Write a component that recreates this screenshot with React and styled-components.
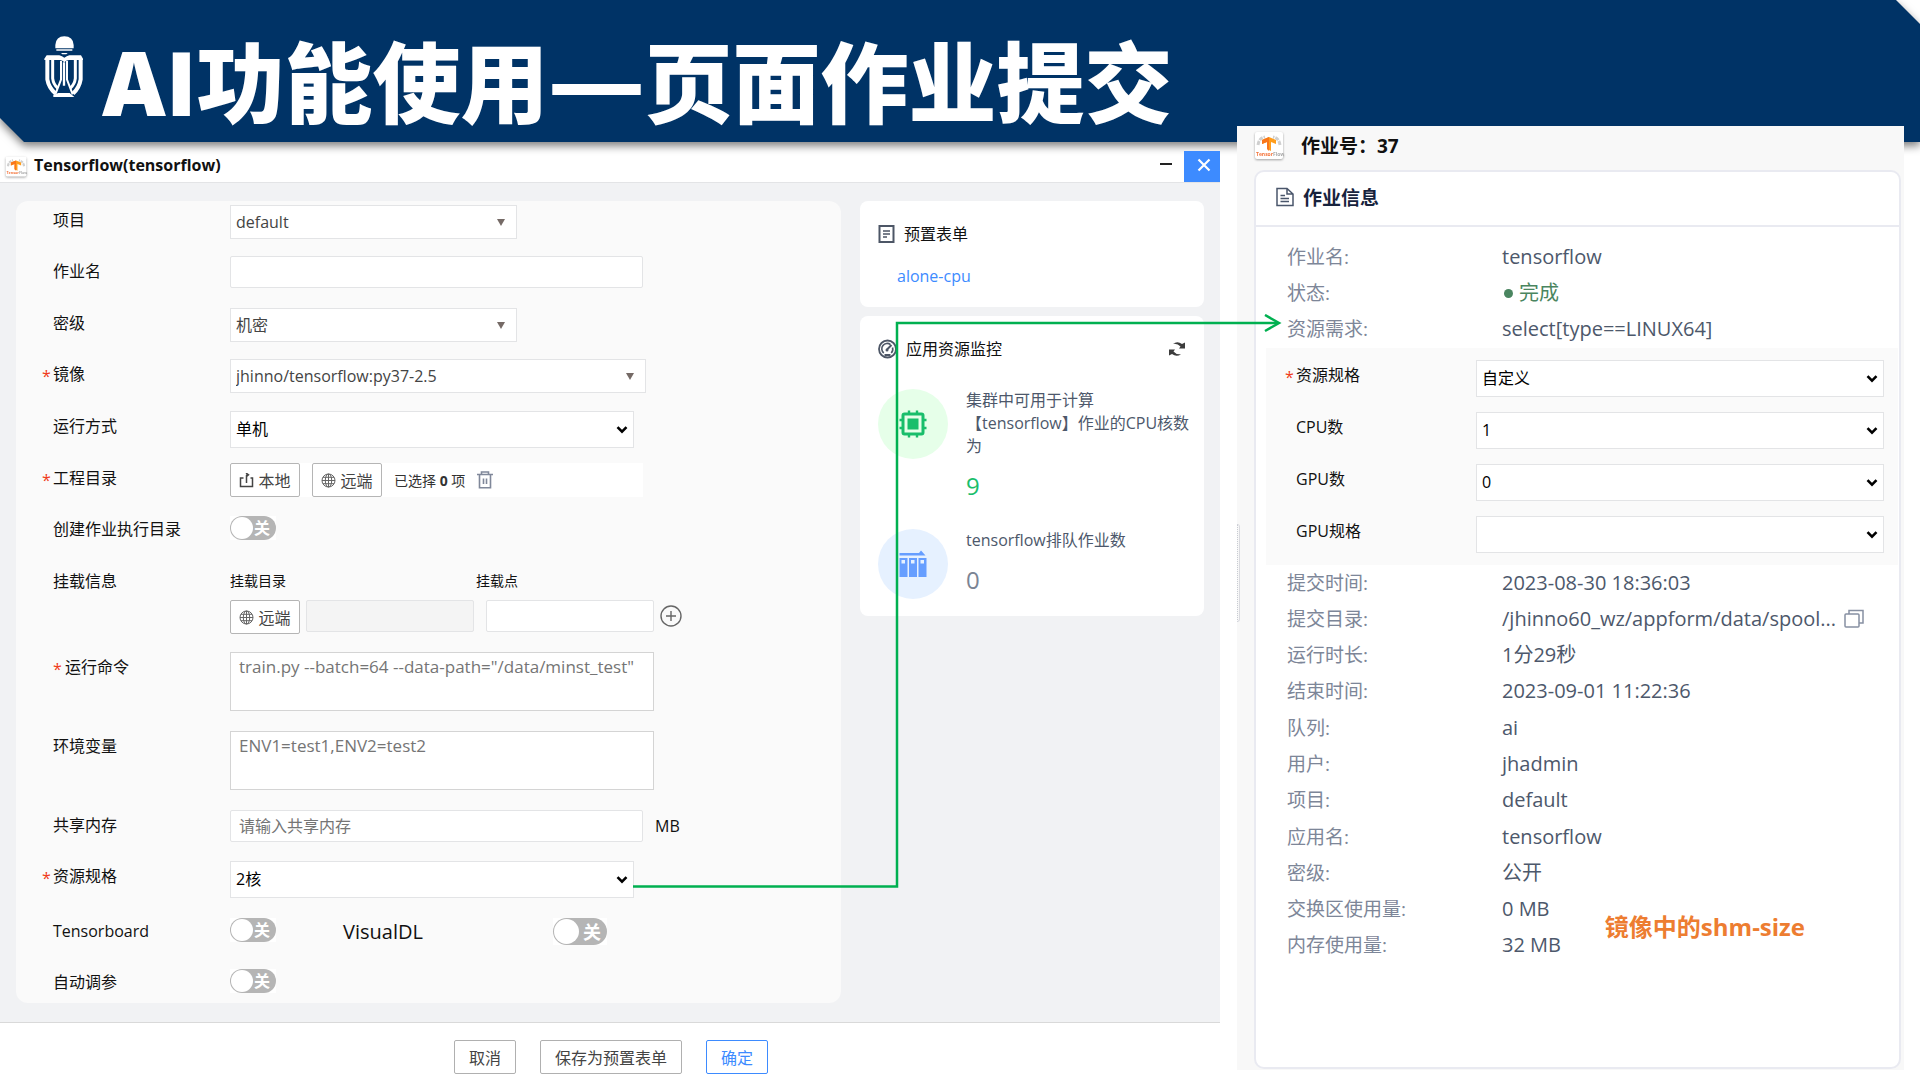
import React from 'react';
import styled, { createGlobalStyle } from 'styled-components';

const COLORS = {
	navy: '#003366',
	blue: '#3d8bff',
	green: '#19be6b',
	arrow: '#00b050',
	orange: '#ed7d31',
	text: '#111111',
	muted: '#7d8698',
	value: '#4d586b',
	border: '#e3e4e6',
	body: '#f1f2f4',
};

const FONT = "'Open Sans', 'Noto Sans CJK SC', sans-serif";

const JOB_INFO_TOP = [
	{ term: '作业名:', value: 'tensorflow' },
	{ term: '状态:', value: '完成', done: true },
	{ term: '资源需求:', value: 'select[type==LINUX64]' },
];

const JOB_INFO_BOTTOM = [
	{ term: '提交时间:', value: '2023-08-30 18:36:03' },
	{ term: '提交目录:', value: '/jhinno60_wz/appform/data/spool...', copy: true },
	{ term: '运行时长:', value: '1分29秒' },
	{ term: '结束时间:', value: '2023-09-01 11:22:36' },
	{ term: '队列:', value: 'ai' },
	{ term: '用户:', value: 'jhadmin' },
	{ term: '项目:', value: 'default' },
	{ term: '应用名:', value: 'tensorflow' },
	{ term: '密级:', value: '公开' },
	{ term: '交换区使用量:', value: '0 MB' },
	{ term: '内存使用量:', value: '32 MB' },
];

const SPEC_FIELDS = [
	{ id: 'job-spec', label: '资源规格', value: '自定义', required: true },
	{ id: 'job-cpu', label: 'CPU数', value: '1' },
	{ id: 'job-gpu', label: 'GPU数', value: '0' },
	{ id: 'job-gpu-spec', label: 'GPU规格', value: '' },
];

const App = () => {
	return (
		<Page>
			<GlobalStyle />
			<BannerShadow>
				<Banner>
					<UniversityLogo />
					<Title>AI功能使用<Dash>—</Dash>页面作业提交</Title>
				</Banner>
			</BannerShadow>
			<Main>
				<SubmitWindow />
				<JobPanel />
				<Connector />
			</Main>
		</Page>
	);
};

const SubmitWindow = () => (
	<Window>
		<TitleBar>
			<TensorflowIcon size={22} />
			<WindowTitle>Tensorflow(tensorflow)</WindowTitle>
			<WindowButton aria-label='最小化'>
				<svg width='14' height='14' viewBox='0 0 14 14'>
					<path d='M1 6H13' stroke='#222' strokeWidth='2' />
				</svg>
			</WindowButton>
			<WindowButton aria-label='关闭' $primary>
				<svg width='14' height='14' viewBox='0 0 14 14'>
					<path d='M1.500 1.500L12.500 12.500M12.500 1.500L1.500 12.500' stroke='#fff' strokeWidth='2.200' />
				</svg>
			</WindowButton>
		</TitleBar>
		<WindowBody>
			<SubmitForm />
			<Sidebar />
		</WindowBody>
		<Footer>
			<FooterButton>取消</FooterButton>
			<FooterButton>保存为预置表单</FooterButton>
			<FooterButton $primary>确定</FooterButton>
		</Footer>
	</Window>
);

const SubmitForm = () => (
	<FormCard>
		<Row $height={51}>
			<Label htmlFor='project'>项目</Label>
			<Dropdown id='project' value='default' width={287} arrow='triangle' />
		</Row>
		<Row>
			<Label htmlFor='job-name'>作业名</Label>
			<TextInput id='job-name' $width={413} />
		</Row>
		<Row $height={51}>
			<Label htmlFor='level'>密级</Label>
			<Dropdown id='level' value='机密' width={287} arrow='triangle' />
		</Row>
		<Row>
			<Label htmlFor='image' $required>镜像</Label>
			<Dropdown id='image' value='jhinno/tensorflow:py37-2.5' width={416} arrow='triangle' />
		</Row>
		<Row>
			<Label htmlFor='mode'>运行方式</Label>
			<Dropdown id='mode' value='单机' width={404} tall />
		</Row>
		<Row $height={51}>
			<Label as='span' $required>工程目录</Label>
			<FilePicker>
				<SmallButton>
					<UploadIcon />
					本地
				</SmallButton>
				<SmallButton>
					<GlobeIcon />
					远端
				</SmallButton>
				<Selected>
					已选择 <b>0</b> 项
				</Selected>
				<TrashIcon />
			</FilePicker>
		</Row>
		<Row>
			<Label htmlFor='create-dir'>创建作业执行目录</Label>
			<Toggle id='create-dir' />
		</Row>
		<Row $height={86}>
			<Label as='span'>挂载信息</Label>
			<Mounts>
				<SubLabel htmlFor='mount-dir'>挂载目录</SubLabel>
				<SubLabel htmlFor='mount-point'>挂载点</SubLabel>
				<MountSource>
					<SmallButton>
						<GlobeIcon />
						远端
					</SmallButton>
					<TextInput id='mount-dir' $width={168} disabled />
				</MountSource>
				<MountTarget>
					<TextInput id='mount-point' $width={168} />
					<IconButton aria-label='添加'>
						<PlusIcon />
					</IconButton>
				</MountTarget>
			</Mounts>
		</Row>
		<Row $height={79}>
			<Label htmlFor='command' $required $inset>运行命令</Label>
			<TextArea id='command' placeholder='train.py --batch=64 --data-path="/data/minst_test"' />
		</Row>
		<Row $height={79}>
			<Label htmlFor='env'>环境变量</Label>
			<TextArea id='env' placeholder='ENV1=test1,ENV2=test2' />
		</Row>
		<Row $height={51}>
			<Label htmlFor='shm'>共享内存</Label>
			<TextInput id='shm' $width={413} placeholder='请输入共享内存' />
			<Unit>MB</Unit>
		</Row>
		<Row $height={55}>
			<Label htmlFor='spec' $required>资源规格</Label>
			<Dropdown id='spec' value='2核' width={404} tall />
		</Row>
		<Row $height={51}>
			<Label htmlFor='tensorboard'>Tensorboard</Label>
			<Toggle id='tensorboard' />
			<WideLabel htmlFor='visualdl'>VisualDL</WideLabel>
			<Toggle id='visualdl' large />
		</Row>
		<Row $height={36}>
			<Label htmlFor='tuning'>自动调参</Label>
			<Toggle id='tuning' />
		</Row>
	</FormCard>
);

const Sidebar = () => (
	<SideColumn>
		<PresetCard>
			<CardHeading>
				<FormIcon />
				预置表单
			</CardHeading>
			<PresetLink href='#alone-cpu'>alone-cpu</PresetLink>
		</PresetCard>
		<MonitorCard>
			<CardHeading>
				<GaugeIcon />
				应用资源监控
				<RefreshButton aria-label='刷新'>
					<RefreshIcon />
				</RefreshButton>
			</CardHeading>
			<Stat>
				<StatIcon $color='#e6ffe9'>
					<ChipIcon />
				</StatIcon>
				<div>
					<StatText>集群中可用于计算【tensorflow】作业的CPU核数为</StatText>
					<StatValue $color={COLORS.green}>9</StatValue>
				</div>
			</Stat>
			<Stat>
				<StatIcon $color='#e6f1ff'>
					<QueueIcon />
				</StatIcon>
				<div>
					<StatText>tensorflow排队作业数</StatText>
					<StatValue $color='#7b8494'>0</StatValue>
				</div>
			</Stat>
		</MonitorCard>
	</SideColumn>
);

const JobPanel = () => (
	<Panel>
		<PanelHeader>
			<TensorflowIcon size={30} />
			作业号：37
		</PanelHeader>
		<InfoCard>
			<InfoHeader>
				<DocumentIcon />
				作业信息
			</InfoHeader>
			<InfoList items={JOB_INFO_TOP} height={109} />
			<SpecBlock>
				{SPEC_FIELDS.map(({ id, label, value, required }) => (
					<SpecRow key={id}>
						<Label htmlFor={id} $required={required}>{label}</Label>
						<Dropdown id={id} value={value} tall />
					</SpecRow>
				))}
			</SpecBlock>
			<InfoList items={JOB_INFO_BOTTOM} height={399} />
		</InfoCard>
		<DragHandle />
		<Note>镜像中的shm-size</Note>
	</Panel>
);

const InfoList = ({ items, height }) => (
	<InfoGrid $height={height}>
		{items.map(({ term, value, done, copy }) => (
			<InfoRow key={term}>
				<dt>{term}</dt>
				<InfoValue $done={done}>
					{value}
					{copy && (
						<IconButton aria-label='复制'>
							<CopyIcon />
						</IconButton>
					)}
				</InfoValue>
			</InfoRow>
		))}
	</InfoGrid>
);

const Dropdown = ({ id, value, width, tall, arrow = 'chevron' }) => (
	<SelectWrapper $width={width}>
		<Select id={id} defaultValue={value} $tall={tall} $soft={arrow === 'triangle'}>
			<option value={value}>{value}</option>
		</Select>
		{arrow === 'triangle' ? (
			<SelectArrow width='8' height='8' viewBox='0 0 8 8' $right={12}>
				<path d='M0 1H8L4 8Z' fill='#756a66' />
			</SelectArrow>
		) : (
			<SelectArrow width='12' height='8' viewBox='0 0 12 8' $right={6}>
				<path d='M1.500 1.200L6 5.700L10.500 1.200' fill='none' stroke='#000' strokeWidth='2.600' />
			</SelectArrow>
		)}
	</SelectWrapper>
);

const Toggle = ({ id, large }) => (
	<ToggleWrapper $large={large}>
		<ToggleInput type='checkbox' id={id} />
		<ToggleText>关</ToggleText>
	</ToggleWrapper>
);

/* Drawings */

const UniversityLogo = () => (
	<svg width='40' height='62' viewBox='42 35 118 186' fill='#fff'>
		<path d='M75 72V62Q77 36 102 36Q128 36 130 62V72Z' />
		<path d='M78 75H126V79H78Z' />
		<path d='M92 86H112L108 90H96Z' />
		<path d='M42 107V103L49 93H87Q95 95 102 100Q109 95 117 93H152L158 103V107H116Q106 108 102 114Q98 108 88 107Z' />
		<g fill='none' stroke='#fff'>
			<path d='M51 105V165Q55 190 76 208' strokeWidth='12' />
			<path d='M151 105V165Q147 190 128 208' strokeWidth='12' />
			<path d='M67 105V162Q69 180 82 191' strokeWidth='9' />
			<path d='M135 105V162Q133 180 120 191' strokeWidth='9' />
			<path d='M92 110V166L75 210' strokeWidth='6' />
			<path d='M110 110V166L127 210' strokeWidth='6' />
			<path d='M101 114V184' strokeWidth='7' />
		</g>
		<path d='M84 206H118L132 218H69V212Z' />
	</svg>
);

const TensorflowIcon = ({ size }) => (
	<IconTile width={size} height={size} viewBox='0 0 30 30'>
		<rect x='1' y='1' width='28' height='27' rx='2' fill='#fff' />
		<path d='M4 14Q5 7 11 6M26 14Q25 7 19 6' fill='none' stroke='#cfcfcf' strokeWidth='3' strokeDasharray='4 1' />
		<path d='M15 6L22 9V13L17 11V20L13 18V11L8 13V9Z' fill='#ff9d1c' />
		<path d='M15 6V20L13 18V11L8 13V9Z' fill='#f9761a' />
		<text x='2' y='25' fontSize='5' fontWeight='700' fill='#f4743b'>
			Tensor<tspan fill='#aaa'>Flow</tspan>
		</text>
	</IconTile>
);

const UploadIcon = () => (
	<svg width='15' height='15' viewBox='0 0 15 15' fill='none' stroke='#444' strokeWidth='1.500'>
		<path d='M4.500 5H1.500V13.500H13.500V5H11.500M7.500 10V2.500Q7.500 1.800 9 1.800M7 4L9.500 1.800L7 0' />
	</svg>
);

const GlobeIcon = () => (
	<svg width='15' height='15' viewBox='0 0 15 15' fill='none' stroke='#666'>
		<circle cx='7.500' cy='7.500' r='6.500' />
		<ellipse cx='7.500' cy='7.500' rx='3.200' ry='6.500' />
		<path d='M1 7.500H14M7.500 1V14M2 4.300H13M2 10.700H13' />
	</svg>
);

const TrashIcon = () => (
	<svg width='16' height='18' viewBox='0 0 16 18' fill='none' stroke='#80889a' strokeWidth='1.600'>
		<path d='M0 3.500H16M4.500 3V1H11.500V3M2.500 4V16.800H13.500V4M6.500 7.500V13M9.500 7.500V13' />
	</svg>
);

const PlusIcon = () => (
	<svg width='24' height='24' viewBox='0 0 24 24' fill='none' stroke='#666' strokeWidth='1.400'>
		<circle cx='12' cy='12' r='10' />
		<path d='M12 7V17M7 12H17' />
	</svg>
);

const FormIcon = () => (
	<svg width='18' height='20' viewBox='0 0 18 20' fill='none' stroke='#4d5666' strokeWidth='2'>
		<path d='M1.500 2H15.500V18H1.500Z' />
		<path d='M5 7H12M5 10H12M5 13H9' strokeWidth='1.500' />
	</svg>
);

const GaugeIcon = () => (
	<svg width='20' height='20' viewBox='0 0 20 20' fill='none' stroke='#4d5666'>
		<circle cx='9.500' cy='10' r='8.500' strokeWidth='1.800' />
		<path d='M5.800 14A5.300 5.300 0 1 1 12.500 5.600M14.500 8.500A5.300 5.300 0 0 1 13.200 14' strokeWidth='1.600' />
		<path d='M9 10.500L13.500 6' strokeWidth='2' />
		<circle cx='9' cy='11' r='1.500' fill='#4d5666' stroke='none' />
		<path d='M6.500 16H12.500' strokeWidth='2' />
	</svg>
);

const RefreshIcon = () => (
	<svg width='18' height='16' viewBox='0 0 18 16' fill='#3c3c3c'>
		<path d='M5 2.800Q9.500 -0.500 14 3L17 1.500V7.500H11L12.500 5.500Q9.500 2 5 2.800Z' />
		<path d='M13 13.200Q8.500 16.500 4 13L1 14.500V8.500H7L5.500 10.500Q8.500 14 13 13.200Z' />
	</svg>
);

const ChipIcon = () => (
	<svg width='28' height='28' viewBox='0 0 28 28' fill='none' stroke={COLORS.green}>
		<rect x='4' y='4' width='20' height='20' rx='1.500' strokeWidth='3' />
		<rect x='8.500' y='8.500' width='11' height='11' fill={COLORS.green} stroke='none' />
		<path d='M10 0.500V4M18 0.500V4M10 24V27.500M18 24V27.500M0.500 10H4M0.500 18H4M24 10H27.500M24 18H27.500' strokeWidth='2.400' />
	</svg>
);

const QueueIcon = () => (
	<svg width='28' height='28' viewBox='0 0 28 28' fill='#669eff'>
		<path d='M0.500 3H20L22 0.500L26.500 5.500H0.500Z' />
		<path d='M0.500 8H8.500V27H0.500ZM10 8H18V27H10ZM19.500 8H27.500V27H19.500Z' />
		<path d='M2.500 10H6V13.500H2.500ZM12 10H15.500V13.500H12ZM21.500 10H25V13.500H21.500Z' fill='#e6f1ff' />
	</svg>
);

const DocumentIcon = () => (
	<svg width='18' height='20' viewBox='0 0 18 20' fill='none' stroke='#4a566b' strokeWidth='1.500'>
		<path d='M1 1.500H11L17 7V18.500H1ZM11 1.500V7H17' />
		<path d='M4.500 8.500H9M4.500 11.500H13M4.500 14.500H13' />
	</svg>
);

const CopyIcon = () => (
	<svg width='20' height='20' viewBox='0 0 20 20' fill='none' stroke='#8790a2' strokeWidth='1.500'>
		<rect x='1' y='5' width='14' height='13' rx='1' />
		<path d='M5 5V1.500H19V14H15' />
	</svg>
);

const Connector = () => (
	<ConnectorSvg width='650' height='580' viewBox='0 0 650 580' fill='none' stroke={COLORS.arrow}>
		<path d='M0 572.500H264V9H645' strokeWidth='2.500' />
		<path d='M632 1L646 9L632 17' strokeWidth='2.500' />
	</ConnectorSvg>
);

/* Styles */

const GlobalStyle = createGlobalStyle`
	*,
	*::before,
	*::after {
		box-sizing: border-box;
	}

	body {
		margin: 0;
		background: #ffffff;
		color: ${COLORS.text};
		font-family: ${FONT};
		font-size: 16px;
	}

	input, select, textarea, button {
		font: inherit;
		color: inherit;
	}
`;

const Page = styled.div`
	display: flex;
	flex-direction: column;
	min-height: 100vh;
	overflow: hidden;
`;

const BannerShadow = styled.header`
	position: relative;
	filter: drop-shadow(0 4px 4px rgba(0, 0, 0, 0.5));
`;

const Banner = styled.div`
	display: flex;
	align-items: flex-start;
	gap: 18px;
	height: 142px;
	padding: 36px 44px 0;
	background: ${COLORS.navy};
	clip-path: polygon(0 0, calc(100% - 24px) 0, 100% 24px, 100% 100%, 24px 100%, 0 118px);
`;

const Title = styled.h1`
	margin: 0;
	color: #ffffff;
	font-size: 88px;
	font-weight: 900;
	line-height: 92px;
	white-space: nowrap;
`;

const Dash = styled.span`
	font-family: 'Open Sans', sans-serif;
	font-size: 96px;
	font-weight: 700;
	line-height: 1px;
`;

const Main = styled.main`
	position: relative;
	flex: 1;
	display: grid;
	grid-template-columns: minmax(0, 1220fr) minmax(0, 667fr);
	gap: 17px;
	padding-right: 16px;
`;

const Window = styled.section`
	display: flex;
	flex-direction: column;
	padding-top: 9px;
`;

const TitleBar = styled.div`
	display: flex;
	align-items: center;
	height: 32px;
	padding-left: 5px;
	border-bottom: 1px solid ${COLORS.border};
`;

const WindowTitle = styled.h2`
	flex: 1;
	margin: 0 0 4px 7px;
	font-size: 16px;
	font-weight: 700;
	line-height: 24px;
`;

const WindowButton = styled.button`
	display: grid;
	place-items: center;
	width: 36px;
	height: 31px;
	margin-left: 2px;
	padding: 0 0 3px 4px;
	border: none;
	background: ${(props) => (props.$primary ? COLORS.blue : 'transparent')};
`;

const WindowBody = styled.div`
	flex: 1;
	display: grid;
	grid-template-columns: minmax(0, 825fr) minmax(0, 344fr);
	gap: 19px;
	padding: 18px 16px 19px;
	background: ${COLORS.body};
`;

const FormCard = styled.form`
	padding: 4px 37px 0;
	border-radius: 12px;
	background: #fafafa;
`;

const Row = styled.div`
	display: flex;
	align-items: flex-start;
	height: ${(props) => props.$height || 52}px;
`;

const Label = styled.label`
	position: relative;
	flex: none;
	width: 177px;
	padding-left: ${(props) => (props.$inset ? 12 : 0)}px;
	line-height: 30px;

	&::before {
		content: '${(props) => (props.$required ? '*' : '')}';
		position: absolute;
		top: 2px;
		left: ${(props) => (props.$inset ? 0 : -11)}px;
		color: #f03a17;
	}
`;

const WideLabel = styled.label`
	width: 210px;
	margin-left: 67px;
	font-size: 20px;
	line-height: 32px;
`;

const SelectWrapper = styled.div`
	position: relative;
	width: ${(props) => (props.$width ? props.$width + 'px' : '100%')};
`;

const Select = styled.select`
	appearance: none;
	display: block;
	width: 100%;
	height: ${(props) => (props.$tall ? 37 : 34)}px;
	padding: 0 28px 1px 5px;
	border: 1px solid ${COLORS.border};
	border-radius: 0;
	background: #ffffff;
	color: ${(props) => (props.$soft ? '#444444' : '#000000')};
`;

const SelectArrow = styled.svg`
	position: absolute;
	top: calc(50% - 4px);
	right: ${(props) => props.$right}px;
	pointer-events: none;
`;

const TextInput = styled.input`
	width: ${(props) => props.$width}px;
	height: 32px;
	padding: 0 8px;
	border: 1px solid ${COLORS.border};
	border-radius: 2px;
	background: #ffffff;

	&:disabled {
		background: #f4f4f4;
	}

	&::placeholder {
		color: #757575;
	}
`;

const TextArea = styled.textarea`
	display: block;
	width: 424px;
	height: 59px;
	padding: 3px 8px;
	border: 1px solid #d4d4d4;
	font-size: 17px;
	line-height: 22px;
	resize: none;

	&::placeholder {
		color: #757575;
	}
`;

const FilePicker = styled.div`
	display: flex;
	align-items: center;
	gap: 12px;
	width: 413px;
	background: #ffffff;
`;

const SmallButton = styled.button.attrs({ type: 'button' })`
	display: flex;
	align-items: center;
	justify-content: center;
	gap: 4px;
	width: 70px;
	height: 34px;
	padding: 0;
	border: 1px solid #b5b5b5;
	border-radius: 2px;
	background: #ffffff;
	color: #444444;
`;

const IconButton = styled.button.attrs({ type: 'button' })`
	display: grid;
	padding: 0;
	border: none;
	background: transparent;
`;

const Selected = styled.span`
	color: #333333;
	font-size: 14px;
`;

const Mounts = styled.div`
	display: grid;
	grid-template-columns: 246px auto;
	align-items: start;
	row-gap: 4px;
`;

const SubLabel = styled.label`
	font-size: 14px;
	line-height: 30px;
`;

const MountSource = styled.div`
	display: flex;
	gap: 6px;
`;

const MountTarget = styled.div`
	display: flex;
	align-items: center;
	gap: 5px;
	padding-left: 10px;
`;

const Unit = styled.span`
	margin-left: 12px;
	line-height: 32px;
`;

const ToggleWrapper = styled.span`
	position: relative;
	display: inline-flex;
	width: ${(props) => (props.$large ? 54 : 46)}px;
	height: ${(props) => (props.$large ? 27 : 24)}px;
	margin-top: 2px;
	background: #ffffff;
	font-size: ${(props) => (props.$large ? 18 : 16)}px;
`;

const ToggleInput = styled.input`
	appearance: none;
	width: 100%;
	height: 100%;
	margin: 0;
	border-radius: 14px;
	background: #b5b5b5;

	&::before {
		content: '';
		display: block;
		height: calc(100% - 2px);
		aspect-ratio: 1;
		margin: 1px;
		border-radius: 50%;
		background: #ffffff;
	}
`;

const ToggleText = styled.span`
	position: absolute;
	top: 0;
	right: 6px;
	bottom: 2px;
	display: flex;
	align-items: center;
	color: #ffffff;
	font-weight: 700;
	pointer-events: none;
`;

const SideColumn = styled.aside`
	display: flex;
	flex-direction: column;
	gap: 9px;
`;

const Card = styled.section`
	border-radius: 8px;
	background: #ffffff;
`;

const PresetCard = styled(Card)`
	height: 106px;
	padding: 20px 18px;
`;

const MonitorCard = styled(Card)`
	padding: 20px 9px 17px 18px;
`;

const CardHeading = styled.h3`
	display: flex;
	align-items: center;
	gap: 8px;
	margin: 0;
	font-size: 16px;
	font-weight: 400;
	line-height: 26px;
`;

const PresetLink = styled.a`
	display: block;
	margin: 17px 0 0 19px;
	color: ${COLORS.blue};
	line-height: 24px;
	text-decoration: none;
`;

const RefreshButton = styled(IconButton)`
	margin-left: auto;
	margin-right: 9px;
`;

const Stat = styled.div`
	display: grid;
	grid-template-columns: 70px 1fr;
	gap: 18px;
	margin-top: 27px;
`;

const StatIcon = styled.div`
	display: grid;
	place-items: center;
	width: 70px;
	height: 70px;
	border-radius: 50%;
	background: ${(props) => props.$color};
`;

const StatText = styled.p`
	margin: 0;
	color: ${COLORS.value};
	line-height: 23px;
`;

const StatValue = styled.p`
	margin: 12px 0 0;
	color: ${(props) => props.$color};
	font-size: 24px;
	line-height: 32px;
`;

const Panel = styled.section`
	position: relative;
	align-self: start;
	margin-top: -16px;
	padding: 7px 3px 1px 17px;
	background: #f8f8f8;
`;

const PanelHeader = styled.h2`
	display: flex;
	align-items: center;
	gap: 17px;
	height: 37px;
	margin: 0;
	padding-bottom: 12px;
	font-size: 19px;
	font-weight: 700;
	line-height: 24px;
`;

const InfoCard = styled.div`
	padding: 0 1px 103px 10px;
	border: 2px solid #e9eaf1;
	border-radius: 10px;
	background: #ffffff;
`;

const InfoHeader = styled.h3`
	display: flex;
	align-items: center;
	gap: 9px;
	height: 55px;
	margin: 0 -1px 12px -10px;
	padding: 0 0 3px 20px;
	border-bottom: 2px solid #e9eaf1;
	color: #17233d;
	font-size: 19px;
	font-weight: 700;
`;

const InfoGrid = styled.dl`
	display: grid;
	grid-auto-rows: 1fr;
	min-height: ${(props) => props.$height}px;
	margin: 0;
	padding-left: 21px;
	font-size: 19px;
`;

const InfoRow = styled.div`
	display: grid;
	grid-template-columns: 215px 1fr;
	align-items: center;
	padding-bottom: 1px;
	color: ${COLORS.muted};
	line-height: 32px;
`;

const InfoValue = styled.dd`
	display: flex;
	align-items: center;
	gap: 8px;
	margin: 0;
	color: ${(props) => (props.$done ? '#4a8560' : COLORS.value)};
	font-size: 20px;
	white-space: nowrap;

	&::before {
		content: '';
		display: ${(props) => (props.$done ? 'block' : 'none')};
		width: 9px;
		height: 9px;
		margin: 2px -2px 0 2px;
		border-radius: 50%;
		background: currentColor;
	}
`;

const SpecBlock = styled.div`
	display: grid;
	gap: 15px;
	padding: 12px 14px 12px 30px;
	background: #fafafa;
`;

const SpecRow = styled.div`
	display: grid;
	grid-template-columns: 180px 1fr;
`;

const DragHandle = styled.span`
	position: absolute;
	top: 398px;
	left: 0;
	width: 3px;
	height: 98px;
	border: 1px solid #dadbe0;
	border-left: 1px dotted #c8cbd2;
	border-radius: 0 3px 3px 0;
`;

const Note = styled.p`
	position: absolute;
	right: 99px;
	bottom: 125px;
	margin: 0;
	color: ${COLORS.orange};
	font-size: 24px;
	font-weight: 700;
	line-height: 36px;
`;

const Footer = styled.footer`
	display: flex;
	justify-content: center;
	gap: 24px;
	padding: 17px 0 6px 2px;
	border-top: 1px solid #d9d9d9;
	background: #ffffff;
`;

const FooterButton = styled.button`
	height: 34px;
	padding: 0 14px;
	border: 1px solid ${(props) => (props.$primary ? COLORS.blue : '#b0b0b0')};
	border-radius: 2px;
	background: #ffffff;
	color: ${(props) => (props.$primary ? COLORS.blue : '#444444')};
`;

const IconTile = styled.svg`
	flex: none;
	overflow: hidden;
	filter: drop-shadow(0 1px 1px rgba(0, 0, 0, 0.35));
`;

const ConnectorSvg = styled.svg`
	position: absolute;
	top: 172px;
	left: 633px;
	pointer-events: none;
`;

export default App;
